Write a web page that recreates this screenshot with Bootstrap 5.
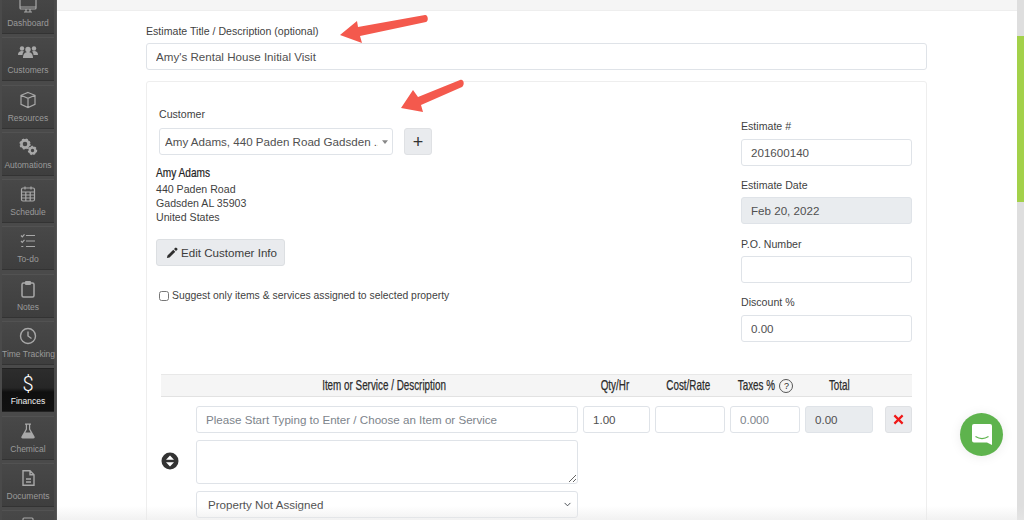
<!DOCTYPE html>
<html lang="en">
<head>
<meta charset="UTF-8">
<meta name="viewport" content="width=device-width, initial-scale=1.0">
<title>New Estimate</title>
<link href="https://cdn.jsdelivr.net/npm/bootstrap@5.3.0/dist/css/bootstrap.min.css" rel="stylesheet">
<style>
  html, body { height: 520px; overflow: hidden; }
  body { font-family: "Liberation Sans", Arial, sans-serif; font-size: 11px; color: #3d3d3d; background: #fff; }
  .app-shell { height: 520px; position: relative; }

  /* left rail */
  .side-rail { width: 57px; flex: none; background: #4a4a4a; overflow: hidden; padding: 0 2px; border-right: 1px solid #555; }
  .rail-stack { margin-top: -10px; }
  .rail-item { height: 44px; margin-bottom: 3.3px; background: linear-gradient(#484848, #3e3e3e); border-bottom: 1px solid #333; border-top: 1px solid #525252; color: #9a9a9a; font-size: 8.5px; line-height: 10px; text-align: center; white-space: nowrap; padding-top: 4px; }
  .rail-item svg { display: block; width: 20px; height: 20px; margin: 0 auto 3px; fill: none; stroke: #a8a8a8; stroke-width: 1.2; }
  .rail-item svg.solid { fill: #a8a8a8; stroke: none; }
  .rail-item.active { background: linear-gradient(#2d2d2d 0, #262626 45%, #0f0f0f 55%, #111 100%); color: #f2f2f2; border-color: #222; }
  .rail-dollar { display: block; height: 23px; font-family: Roboto, sans-serif; font-size: 20px; line-height: 23px; font-weight: 300; color: #fff; }

  /* main */
  .main-pane { min-width: 0; }
  .top-strip { height: 11px; background: #f5f5f5; border-bottom: 1px solid #eee; }
  .page-body { padding: 13px 90px 0 89px; }
  .page-body label { display: block; font-size: 10.6px; line-height: 14px; margin-bottom: 7px; color: #3f3f3f; }
  .page-body > label { margin-bottom: 5px; }
  .form-control, .form-select { height: 27px; min-height: 27px; padding: 0 9px; font-size: 11.6px; color: #505050; border-color: #dfe3e8; border-radius: 3px; }
  .form-select { padding-left: 11px; background-size: 9px 7px; background-position: right 5px center; }
  .form-control::placeholder { color: #7d848b; }
  .form-control[readonly] { background: #e9ecef; }
  .title-input { margin-bottom: 11px; }
  .estimate-card { border: 1px solid #eeeeee; border-radius: 3px; height: 460px; padding: 25px 14px 0 12px; }
  .customer-col { width: 320px; }
  .customer-pick { width: 234px; padding: 0 14px 0 5px; background-image: url("data:image/svg+xml,%3csvg xmlns='http://www.w3.org/2000/svg' viewBox='0 0 8 5'%3e%3cpath fill='%23888' d='M0 0h8L4 5z'/%3e%3c/svg%3e"); background-size: 6px 4px; background-position: right 4px center; }
  .add-btn { width: 28px; height: 27px; margin-left: 11px; padding: 0; background: #e9ebee; border: 1px solid #dfe1e4; border-radius: 3px; color: #333; font-size: 18px; line-height: 24px; }
  .cust-name { font-size: 13.5px; line-height: 15px; color: #222; margin: 10px 0 0 -3px; transform: scaleX(.75); transform-origin: left center; -webkit-text-stroke: .2px #222; }
  .cust-addr { font-size: 10.6px; line-height: 14px; color: #3f3f3f; margin: 2px 0 0 -3px; }
  .edit-btn { display: inline-flex; align-items: center; height: 27px; width: 129px; padding: 0 0 0 9px; margin: 15px 0 0 -3px; font-size: 11.6px; color: #3c3c3c; background: #e9ebee; border: 1px solid #dcdfe2; border-radius: 3px; }
  .edit-btn svg { width: 12px; height: 12px; margin-right: 3px; fill: #2e2e2e; }
  .suggest-row { margin-top: 23px; font-size: 10.4px; line-height: 14px; color: #3f3f3f; }
  .suggest-row input { width: 10px; height: 10px; margin: 0 3px 0 0; border-color: #777; border-radius: 2px; }
  .meta-col { width: 171px; padding-top: 12px; }
  .meta-col .form-control { margin-bottom: 12.3px; }
  .page-body .meta-col label { margin-bottom: 5.5px; }

  /* line items */
  .items-head { margin: 20px 0 9px 2px; height: 23px; background: #f5f5f5; border-top: 1px solid #e8e8e8; border-bottom: 1px solid #e2e2e2; font-size: 14.5px; line-height: 21px; color: #2b2b2b; text-align: center; white-space: nowrap; }
  .head-txt { display: inline-block; transform: scaleX(.68); -webkit-text-stroke: .25px #2b2b2b; }
  .col-item .head-txt { margin: 0 -30px; }
  .tax-txt { margin: 0 -8px 0 -8px; }
  .items-head .col-item { padding-right: 6px; }
  .items-head .col-qty, .items-head .col-cost { padding-right: 4px; }
  .items-head .qm { display: inline-block; width: 14px; height: 14px; margin-left: 4px; border: 1px solid #555; border-radius: 50%; font-size: 9px; line-height: 12px; vertical-align: 1px; }
  .col-drag { width: 35px; flex: none; }
  .col-item { width: 382px; flex: none; }
  .col-qty { width: 67px; flex: none; margin-left: 5px; }
  .col-cost { width: 70px; flex: none; margin-left: 5px; }
  .col-tax { width: 70px; flex: none; margin-left: 5px; }
  .col-total { width: 68px; flex: none; margin-left: 5px; }
  .col-del { width: 27px; flex: none; margin-left: 12px; }
  .items-row { margin-left: 2px; }
  .drag-cell { padding: 46px 0 0 0; }
  .drag-cell svg { width: 18px; height: 18px; display: block; }
  .item-note { height: 44px; margin: 7px 0 7px; }
  .del-btn { width: 27px; height: 27px; padding: 0; background: #e9ebee; border: 1px solid #dfe1e4; border-radius: 3px; display: flex; align-items: center; justify-content: center; }
  .del-btn svg { width: 11px; height: 11px; stroke: #f01818; stroke-width: 2.4; }

  /* scrollbar + overlays */
  .fake-scroll { width: 7px; flex: none; background: #dedede; padding-top: 36px; }
  .fake-thumb { height: 166px; background: #a3d14a; }
  .chat-bubble { position: absolute; left: 960px; top: 413px; width: 43px; height: 43px; border-radius: 50%; background: #5eb34d; box-shadow: 0 1px 12px rgba(0,0,0,.08); display: flex; align-items: center; justify-content: center; }
  .chat-bubble svg { width: 22px; height: 24px; }
  .note-arrow { position: absolute; left: 0; top: 0; width: 1024px; height: 130px; pointer-events: none; }
  .bottom-fade { position: absolute; left: 57px; right: 0; bottom: 0; height: 14px; background: linear-gradient(rgba(238,238,238,0), rgba(232,232,232,.6)); pointer-events: none; }
</style>
</head>
<body>
<div class="app-shell d-flex">
  <nav class="side-rail">
    <div class="rail-stack">
      <div class="rail-item"><svg viewBox="0 0 20 20"><rect x="2" y="3" width="16" height="11" rx="1"/><path d="M2 12h16M8 14v3M12 14v3M6 17h8"/></svg>Dashboard</div>
      <div class="rail-item"><svg class="solid" viewBox="0 0 20 20"><circle cx="4" cy="6.5" r="2.2"/><circle cx="16" cy="6.5" r="2.2"/><circle cx="10" cy="7.5" r="2.7"/><path d="M0 13c0-3 1.500-4 4-4 .8 0 1.500.2 2 .5-1 1-1.500 2-1.500 3.500zM20 13c0-3-1.500-4-4-4-.8 0-1.500.2-2 .5 1 1 1.500 2 1.500 3.500zM5 16c0-4 2-6 5-6s5 2 5 6z"/></svg>Customers</div>
      <div class="rail-item"><svg viewBox="0 0 20 20"><path d="M10 2.500l7 2.800v9L10 17.500l-7-3.200v-9zM3 5.300l7 3 7-3M10 8.300v9.200"/></svg>Resources</div>
      <div class="rail-item"><svg class="solid" viewBox="0 0 20 20"><circle cx="7" cy="7" r="3.600" fill="none" stroke="#a8a8a8" stroke-width="2.600"/><circle cx="7" cy="7" r="4.800" fill="none" stroke="#a8a8a8" stroke-width="1.600" stroke-dasharray="2 1.800"/><circle cx="14.500" cy="13.500" r="2.800" fill="none" stroke="#a8a8a8" stroke-width="2.200"/><circle cx="14.500" cy="13.500" r="4" fill="none" stroke="#a8a8a8" stroke-width="1.400" stroke-dasharray="1.800 1.600"/></svg>Automations</div>
      <div class="rail-item"><svg viewBox="0 0 20 20"><rect x="3.500" y="4" width="13" height="13" rx="1.500"/><path d="M3.500 8h13M3.500 11h13M3.500 14h13M7.800 8v9M12.200 8v9M7 2.500v3M13 2.500v3"/></svg>Schedule</div>
      <div class="rail-item"><svg viewBox="0 0 20 20"><path d="M8 4.500h9M8 10h9M8 15.500h9M3 4.500l1.300 1.300L6.500 3.300M3 10l1.300 1.300L6.500 8.800M3.300 15.500h2"/></svg>To-do</div>
      <div class="rail-item"><svg viewBox="0 0 20 20"><rect x="4" y="4" width="12" height="14" rx="1.500" stroke-width="1.500"/><rect x="7.500" y="2.500" width="5" height="3" rx=".8" fill="#a8a8a8"/></svg>Notes</div>
      <div class="rail-item"><svg viewBox="0 0 20 20"><circle cx="10" cy="10" r="7.500" stroke-width="1.400"/><path d="M10 5.500V10l3.500 2.500" stroke-width="1.400"/></svg>Time Tracking</div>
      <div class="rail-item active"><span class="rail-dollar">$</span>Finances</div>
      <div class="rail-item"><svg class="solid" viewBox="0 0 20 20"><path d="M7 2.500h6v1.200h-.8v4.300l4.300 7.500c.6 1.100-.1 2-1.200 2H4.700c-1.100 0-1.800-.9-1.200-2l4.300-7.500V3.700H7zM9 3.700v4.700L7.300 11.500h5.400L11 8.400V3.700z"/></svg>Chemical</div>
      <div class="rail-item"><svg viewBox="0 0 20 20"><path d="M5 2.800h7l4 4v10.400H5zM12 2.800v4h4M8 11h5M8 14h5" stroke-width="1.400"/></svg>Documents</div>
      <div class="rail-item"><svg viewBox="0 0 20 20"><rect x="5" y="3" width="10" height="14" rx="1"/></svg></div>
    </div>
  </nav>

  <main class="main-pane flex-grow-1">
    <div class="top-strip"></div>
    <div class="page-body">
      <label for="estTitle">Estimate Title / Description (optional)</label>
      <input id="estTitle" class="form-control title-input" value="Amy's Rental House Initial Visit">

      <div class="estimate-card">
        <div class="d-flex justify-content-between">
          <div class="customer-col">
            <label for="custPick">Customer</label>
            <div class="d-flex align-items-center">
              <select id="custPick" class="form-select customer-pick"><option>Amy Adams, 440 Paden Road Gadsden ...</option></select>
              <button type="button" class="btn add-btn">+</button>
            </div>
            <div class="cust-name">Amy Adams</div>
            <div class="cust-addr">440 Paden Road<br>Gadsden AL 35903<br>United States</div>
            <button type="button" class="btn edit-btn"><svg viewBox="0 0 16 16"><path d="M12.100 1.200a1.500 1.500 0 0 1 2.100 0l.6.6a1.500 1.500 0 0 1 0 2.100l-1.500 1.500-2.700-2.700zM9.700 3.600l2.700 2.700-7.700 7.700-3.500.8.800-3.500z"/></svg>Edit Customer Info</button>
            <div class="suggest-row d-flex align-items-center"><input class="form-check-input" type="checkbox" id="suggestOnly"><span>Suggest only items &amp; services assigned to selected property</span></div>
          </div>
          <div class="meta-col">
            <label for="estNum">Estimate #</label>
            <input id="estNum" class="form-control" value="201600140">
            <label for="estDate">Estimate Date</label>
            <input id="estDate" class="form-control" value="Feb 20, 2022" readonly>
            <label for="poNum">P.O. Number</label>
            <input id="poNum" class="form-control">
            <label for="discPct">Discount %</label>
            <input id="discPct" class="form-control" value="0.00">
          </div>
        </div>

        <div class="items-head d-flex">
          <div class="col-drag"></div>
          <div class="col-item"><span class="head-txt">Item or Service / Description</span></div>
          <div class="col-qty"><span class="head-txt">Qty/Hr</span></div>
          <div class="col-cost"><span class="head-txt">Cost/Rate</span></div>
          <div class="col-tax"><span class="head-txt tax-txt">Taxes %</span><span class="qm">?</span></div>
          <div class="col-total"><span class="head-txt">Total</span></div>
          <div class="col-del"></div>
        </div>
        <div class="items-row d-flex align-items-start">
          <div class="col-drag drag-cell"><svg viewBox="0 0 18 18"><circle cx="9" cy="9" r="8.500" fill="#333"/><path d="M9 3.500l4 4.200H5zM9 14.500l-4-4.200h8z" fill="#fff"/></svg></div>
          <div class="col-item">
            <input class="form-control" placeholder="Please Start Typing to Enter / Choose an Item or Service">
            <textarea class="form-control item-note"></textarea>
            <select class="form-select"><option>Property Not Assigned</option></select>
          </div>
          <div class="col-qty"><input class="form-control" value="1.00"></div>
          <div class="col-cost"><input class="form-control"></div>
          <div class="col-tax"><input class="form-control" placeholder="0.000"></div>
          <div class="col-total"><input class="form-control" value="0.00" readonly></div>
          <div class="col-del"><button type="button" class="btn del-btn"><svg viewBox="0 0 12 12"><path d="M1.500 1.500l9 9M10.500 1.500l-9 9"/></svg></button></div>
        </div>
      </div>
    </div>
  </main>

  <div class="fake-scroll"><div class="fake-thumb"></div></div>

  <svg class="note-arrow" viewBox="0 0 1024 130">
    <path d="M340 35L357 21l1 6 67-12c3-.5 4 6 1 7L360 36l2 7z" fill="#f4594d"/>
    <path d="M401 108L413 90l5 7 42-17c4-1.500 5 5 2 7L421 105l2 7z" fill="#f4594d"/>
  </svg>
  <div class="bottom-fade"></div>
  <div class="chat-bubble"><svg viewBox="0 0 22 24"><path d="M3 1h16a2 2 0 0 1 2 2v19l-5-2.500H3a2 2 0 0 1-2-2V3a2 2 0 0 1 2-2z" fill="#fff"/><path d="M4.500 13.500c4 2.500 9 2.500 13 0" fill="none" stroke="#5eb34d" stroke-width="1.200"/></svg></div>
</div>
<script src="https://cdn.jsdelivr.net/npm/bootstrap@5.3.0/dist/js/bootstrap.bundle.min.js"></script>
</body>
</html>
